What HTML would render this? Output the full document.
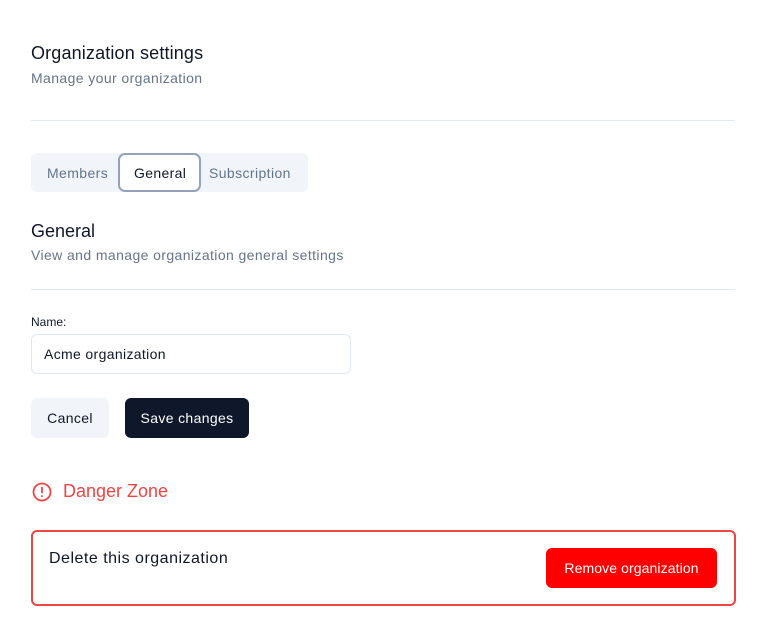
<!DOCTYPE html>
<html><head><style>
*{box-sizing:border-box;margin:0;padding:0}
body{width:765px;height:637px;background:#fff;font-family:"Liberation Sans",sans-serif;color:#0f172a;position:relative;overflow:hidden}
.a{position:absolute;white-space:nowrap}
.muted{color:#64748b;font-size:14px;letter-spacing:0.4px}
.t14{letter-spacing:0.35px}
hr{position:absolute;left:31px;width:704px;border:0;border-top:1px solid #e2e8f0;height:0}
</style></head><body>
<div class="a" style="left:31px;top:43px;font-size:18px;letter-spacing:0.15px">Organization settings</div>
<div class="a muted" style="left:31px;top:70px">Manage your organization</div>
<hr style="top:120px">
<div class="a" style="left:31px;top:153px;width:277px;height:39px;background:#f1f5f9;border-radius:6px"></div>
<div class="a muted" style="left:47px;top:165px">Members</div>
<div class="a" style="left:118px;top:153px;width:83px;height:39px;border:2px solid #94a3b8;border-radius:7px;background:#fff"></div>
<div class="a t14" style="left:134px;top:165px;font-size:14px">General</div>
<div class="a muted" style="left:209px;top:165px">Subscription</div>
<div class="a" style="left:31px;top:221px;font-size:18px">General</div>
<div class="a muted" style="left:31px;top:247px">View and manage organization general settings</div>
<hr style="top:289px">
<div class="a" style="left:31px;top:315px;font-size:12px">Name:</div>
<div class="a" style="left:31px;top:334px;width:320px;height:40px;border:1px solid #e2e8f0;border-radius:6px"></div>
<div class="a t14" style="left:44px;top:346px;font-size:14px">Acme organization</div>
<div class="a t14" style="left:31px;top:398px;width:78px;height:40px;background:#f1f5f9;border-radius:6px;font-size:14px;text-align:center;line-height:40px">Cancel</div>
<div class="a t14" style="left:125px;top:398px;width:124px;height:40px;background:#0f172a;color:#fff;border-radius:6px;font-size:14px;text-align:center;line-height:40px">Save changes</div>
<svg class="a" style="left:32px;top:482px" width="20" height="20" viewBox="0 0 20 20" fill="none" stroke="#ef4444" stroke-width="1.8" stroke-linecap="round"><circle cx="10" cy="10" r="8.5"/><line x1="10" y1="5.5" x2="10" y2="10.5"/><line x1="10" y1="14" x2="10" y2="14.2"/></svg>
<div class="a" style="left:63px;top:481px;font-size:18px;color:#ef4444">Danger Zone</div>
<div class="a" style="left:31px;top:530px;width:705px;height:76px;border:2px solid #ef4444;border-radius:6px"></div>
<div class="a" style="left:49px;top:550px;font-size:16px;letter-spacing:0.5px">Delete this organization</div>
<div class="a" style="left:546px;top:548px;width:171px;height:40px;background:#ff0000;color:#fff;border-radius:6px;font-size:14px;text-align:center;line-height:40px;letter-spacing:0.1px">Remove organization</div>
</body></html>
